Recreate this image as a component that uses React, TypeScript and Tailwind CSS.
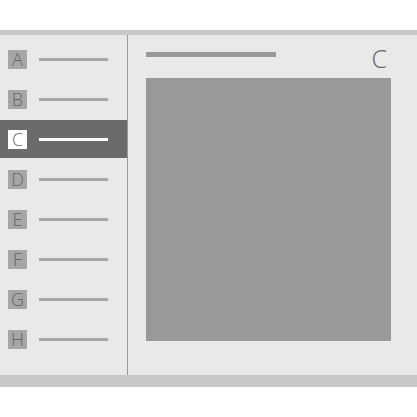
const items = ["A", "B", "C", "D", "E", "F", "G", "H"];

const App = () => {
  return (
    <div className="w-[417px] h-[417px] bg-white pt-[30px] font-['Open_Sans',sans-serif]">
      <div className="h-[5px] bg-[#c8c8c8]" />
      <div className="flex h-[340px] bg-[#e9e9e9]">
        {/* Sidebar */}
        <div className="w-[127px] border-r border-[#999] box-content flex flex-col gap-[2px] pt-[5px]">
          {items.map((l) => {
            const active = l === "C";
            return (
              <div
                key={l}
                className={`h-[38px] flex items-center pl-[8px] ${active ? "bg-[#6b6b6b]" : ""}`}
              >
                <div
                  className={`w-[19px] h-[19px] flex items-center justify-center text-[18px] font-light leading-none ${
                    active ? "bg-white text-[#6a6a6a]" : "bg-[#a6a6a6] text-[#666]"
                  }`}
                >
                  {l}
                </div>
                <div className={`ml-[12px] w-[69px] h-[3px] ${active ? "bg-white" : "bg-[#a6a6a6]"}`} />
              </div>
            );
          })}
        </div>
        {/* Main */}
        <div className="flex-1 pl-[18px] pr-[26px] pt-[17px]">
          <div className="flex items-start justify-between h-[26px]">
            <div className="w-[130px] h-[5px] bg-[#999]" />
            <div className="text-[25px] font-light leading-none text-[#666] -mt-[6px] mr-[4px]">C</div>
          </div>
          <div className="h-[263px] bg-[#999]" />
        </div>
      </div>
      <div className="h-[12px] bg-[#c8c8c8]" />
    </div>
  );
};

export default App;
